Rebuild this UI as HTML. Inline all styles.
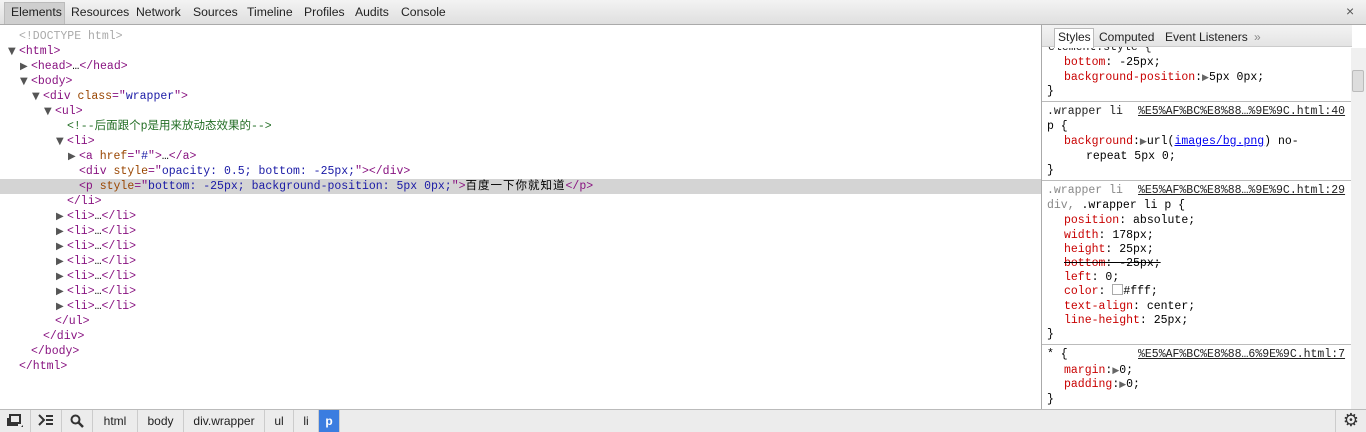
<!DOCTYPE html>
<html><head><meta charset="utf-8"><style>
*{margin:0;padding:0;box-sizing:border-box}
body{width:1366px;height:432px;overflow:hidden;background:#fff;font-family:"Liberation Sans",sans-serif;position:relative}
.top{position:absolute;left:0;top:0;width:1366px;height:25px;background:linear-gradient(#f3f3f3,#dfdfdf);border-bottom:1px solid #aaa;font-size:12.2px;color:#222}
.top span{position:absolute;top:5px}
.sel{position:absolute;left:4px;top:2px;width:61px;height:22px;background:#cfcfcf;border:1px solid #bbb;border-bottom:none}
.m{font-family:"Liberation Mono","Noto Sans CJK SC",monospace;font-size:11.5px;white-space:pre;position:absolute;line-height:15px}
.t{color:#881280}.a{color:#994500}.v{color:#1a1aa6}.c{color:#236e25}.g{color:#aaa}
.tri{display:inline-block;width:11px;color:#555;font-size:10px;font-family:"DejaVu Sans",sans-serif}
.hl{position:absolute;left:0;top:179px;width:1041px;height:15px;background:#d4d4d4}
.side{position:absolute;left:1041px;top:25px;width:325px;height:384px;border-left:1px solid #aaa;background:#fff}
.tabs{position:absolute;left:0;top:0;width:310px;height:22px;background:linear-gradient(#f3f3f3,#e4e4e4);border-bottom:1px solid #ccc;font-size:12px;color:#222}
.tabs span{position:absolute;top:5px}
.p{color:#c80000}.s{color:#888}.k{color:#222}
.u{color:#222;text-decoration:underline}
.sep{position:absolute;left:0;width:310px;height:1px;background:#bbb}
.sb{position:absolute;left:1351px;top:48px;width:15px;height:361px;background:#f0f0f0}
.bot{position:absolute;left:0;top:409px;width:1366px;height:23px;background:#ececec;border-top:1px solid #bbb;font-size:12px;color:#222}
.bot .b{position:absolute;top:0;height:22px;border-right:1px solid #ccc;padding-top:4px;text-align:center}
.tw{font-family:"DejaVu Sans",sans-serif;font-size:9px;color:#666}
</style></head><body>
<div class="top"><div class="sel"></div>
<span style="left:11px">Elements</span><span style="left:71px">Resources</span><span style="left:136px">Network</span><span style="left:193px">Sources</span><span style="left:247px">Timeline</span><span style="left:304px">Profiles</span><span style="left:355px">Audits</span><span style="left:401px">Console</span>
<span style="left:1346px;font-size:14px;top:3px;color:#555">×</span></div>
<div class="hl"></div>
<div class="m g" style="left:19px;top:29px">&lt;!DOCTYPE html&gt;</div>
<div class="m" style="left:8px;top:44px"><span class="tri">▼</span><span class="t">&lt;html&gt;</span></div>
<div class="m" style="left:20px;top:59px"><span class="tri">▶</span><span class="t">&lt;head&gt;</span>…<span class="t">&lt;/head&gt;</span></div>
<div class="m" style="left:20px;top:74px"><span class="tri">▼</span><span class="t">&lt;body&gt;</span></div>
<div class="m" style="left:32px;top:89px"><span class="tri">▼</span><span class="t">&lt;div </span><span class="a">class</span><span class="t">="</span><span class="v">wrapper</span><span class="t">"&gt;</span></div>
<div class="m" style="left:44px;top:104px"><span class="tri">▼</span><span class="t">&lt;ul&gt;</span></div>
<div class="m c" style="left:67px;top:119px">&lt;!--后面跟个p是用来放动态效果的--&gt;</div>
<div class="m" style="left:56px;top:134px"><span class="tri">▼</span><span class="t">&lt;li&gt;</span></div>
<div class="m" style="left:68px;top:149px"><span class="tri">▶</span><span class="t">&lt;a </span><span class="a">href</span><span class="t">="</span><span class="v">#</span><span class="t">"&gt;</span>…<span class="t">&lt;/a&gt;</span></div>
<div class="m" style="left:79px;top:164px"><span class="t">&lt;div </span><span class="a">style</span><span class="t">="</span><span class="v">opacity: 0.5; bottom: -25px;</span><span class="t">"&gt;&lt;/div&gt;</span></div>
<div class="m" style="left:79px;top:179px"><span class="t">&lt;p </span><span class="a">style</span><span class="t">="</span><span class="v">bottom: -25px; background-position: 5px 0px;</span><span class="t">"&gt;</span><span style="letter-spacing:1px">百度一下你就知道</span><span class="t">&lt;/p&gt;</span></div>
<div class="m t" style="left:67px;top:194px">&lt;/li&gt;</div>
<div class="m" style="left:56px;top:209px"><span class="tri">▶</span><span class="t">&lt;li&gt;</span>…<span class="t">&lt;/li&gt;</span></div>
<div class="m" style="left:56px;top:224px"><span class="tri">▶</span><span class="t">&lt;li&gt;</span>…<span class="t">&lt;/li&gt;</span></div>
<div class="m" style="left:56px;top:239px"><span class="tri">▶</span><span class="t">&lt;li&gt;</span>…<span class="t">&lt;/li&gt;</span></div>
<div class="m" style="left:56px;top:254px"><span class="tri">▶</span><span class="t">&lt;li&gt;</span>…<span class="t">&lt;/li&gt;</span></div>
<div class="m" style="left:56px;top:269px"><span class="tri">▶</span><span class="t">&lt;li&gt;</span>…<span class="t">&lt;/li&gt;</span></div>
<div class="m" style="left:56px;top:284px"><span class="tri">▶</span><span class="t">&lt;li&gt;</span>…<span class="t">&lt;/li&gt;</span></div>
<div class="m" style="left:56px;top:299px"><span class="tri">▶</span><span class="t">&lt;li&gt;</span>…<span class="t">&lt;/li&gt;</span></div>
<div class="m t" style="left:55px;top:314px">&lt;/ul&gt;</div>
<div class="m t" style="left:43px;top:329px">&lt;/div&gt;</div>
<div class="m t" style="left:31px;top:344px">&lt;/body&gt;</div>
<div class="m t" style="left:19px;top:359px">&lt;/html&gt;</div>

<div class="side">
<div class="m" style="left:6px;top:15px;clip-path:inset(7px 0 0 0);color:#222">element.style {</div>
<div class="m" style="left:22px;top:30px"><span class="p">bottom</span>: -25px;</div>
<div class="m" style="left:22px;top:45px"><span class="p">background-position</span>:<span class="tw">▶</span>5px 0px;</div>
<div class="m" style="left:5px;top:59px">}</div>
<div class="sep" style="top:76px"></div>
<div class="m" style="left:5px;top:79px"><span class="k">.wrapper li</span></div>
<div class="m u" style="left:96px;top:79px">%E5%AF%BC%E8%88…%9E%9C.html:40</div>
<div class="m" style="left:5px;top:94px">p {</div>
<div class="m" style="left:22px;top:109px"><span class="p">background</span>:<span class="tw">▶</span>url(<span style="color:#00e;text-decoration:underline">images/bg.png</span>) no-</div>
<div class="m" style="left:44px;top:124px">repeat 5px 0;</div>
<div class="m" style="left:5px;top:138px">}</div>
<div class="sep" style="top:155px"></div>
<div class="m s" style="left:5px;top:158px">.wrapper li</div>
<div class="m u" style="left:96px;top:158px">%E5%AF%BC%E8%88…%9E%9C.html:29</div>
<div class="m" style="left:5px;top:173px"><span class="s">div, </span>.wrapper li p {</div>
<div class="m" style="left:22px;top:188px"><span class="p">position</span>: absolute;</div>
<div class="m" style="left:22px;top:203px"><span class="p">width</span>: 178px;</div>
<div class="m" style="left:22px;top:217px"><span class="p">height</span>: 25px;</div>
<div class="m" style="left:22px;top:231px;text-decoration:line-through"><span class="p">bottom</span>: -25px;</div>
<div class="m" style="left:22px;top:245px"><span class="p">left</span>: 0;</div>
<div class="m" style="left:22px;top:259px"><span class="p">color</span>: <span style="display:inline-block;width:11px;height:11px;border:1px solid #aaa;vertical-align:-1px"></span>#fff;</div>
<div class="m" style="left:22px;top:274px"><span class="p">text-align</span>: center;</div>
<div class="m" style="left:22px;top:288px"><span class="p">line-height</span>: 25px;</div>
<div class="m" style="left:5px;top:302px">}</div>
<div class="sep" style="top:319px"></div>
<div class="m" style="left:5px;top:322px">* {</div>
<div class="m u" style="left:96px;top:322px">%E5%AF%BC%E8%88…6%9E%9C.html:7</div>
<div class="m" style="left:22px;top:338px"><span class="p">margin</span>:<span class="tw">▶</span>0;</div>
<div class="m" style="left:22px;top:352px"><span class="p">padding</span>:<span class="tw">▶</span>0;</div>
<div class="m" style="left:5px;top:367px">}</div>
<div class="tabs"><div style="position:absolute;left:12px;top:3px;width:40px;height:20px;background:#fff;border:1px solid #bbb;border-bottom:none"></div>
<span style="left:16px">Styles</span><span style="left:57px">Computed</span><span style="left:123px">Event Listeners</span><span style="left:212px;color:#888">»</span></div>
</div>
<div class="sb"><div style="position:absolute;left:1px;top:22px;width:12px;height:22px;background:#ddd;border:1px solid #bbb;border-radius:2px"></div></div>

<div class="bot">
<div class="b" style="left:0;width:31px"><svg width="16" height="14" viewBox="0 0 16 14" style="margin-top:0"><rect x="3" y="1" width="10" height="8" fill="none" stroke="#333" stroke-width="2"/><path d="M1 4v7h10" fill="none" stroke="#333" stroke-width="2"/><path d="M14 13l2-2v2z" fill="#333"/></svg></div>
<div class="b" style="left:31px;width:31px"><svg width="16" height="12" viewBox="0 0 16 12"><path d="M1 1l5 5-5 5" fill="none" stroke="#333" stroke-width="2"/><path d="M8 2h7M8 6h7M8 10h7" stroke="#333" stroke-width="2"/></svg></div>
<div class="b" style="left:62px;width:31px"><svg width="14" height="14" viewBox="0 0 14 14"><circle cx="5.5" cy="5.5" r="4" fill="none" stroke="#333" stroke-width="2"/><path d="M8.5 8.5l4.5 4.5" stroke="#333" stroke-width="2.5"/></svg></div>
<div class="b" style="left:93px;width:45px">html</div>
<div class="b" style="left:138px;width:46px">body</div>
<div class="b" style="left:184px;width:81px">div.wrapper</div>
<div class="b" style="left:265px;width:29px">ul</div>
<div class="b" style="left:294px;width:25px">li</div>
<div class="b" style="left:319px;width:21px;background:#3b7de0;color:#fff;font-weight:bold">p</div>
<div class="b" style="left:1335px;width:31px;border-left:1px solid #ccc;border-right:none;font-size:18px;padding-top:0;color:#333">⚙</div>
</div>
</body></html>
